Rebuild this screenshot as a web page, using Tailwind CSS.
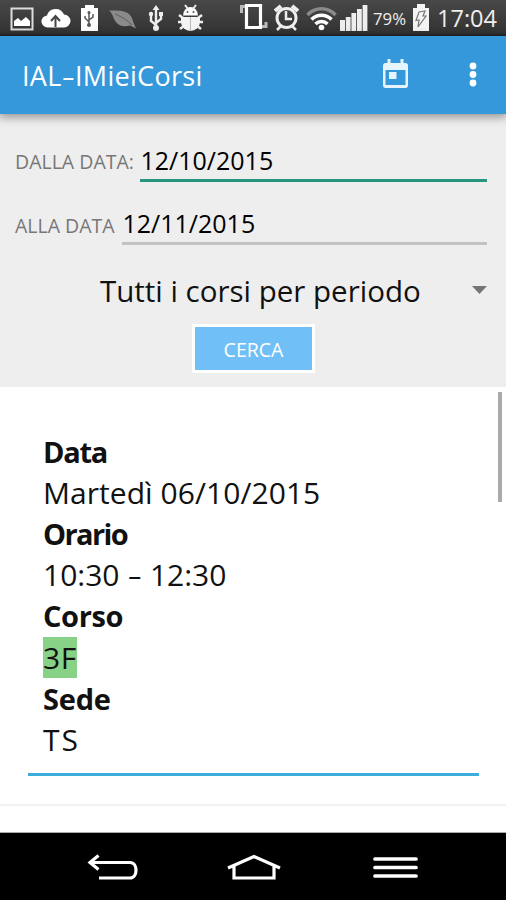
<!DOCTYPE html>
<html lang="it">
<head>
  <meta charset="UTF-8">
  <title>IAL-IMieiCorsi</title>
  <script src="https://cdn.jsdelivr.net/npm/@tailwindcss/browser@4"></script>
</head>
<body class="w-[506px] h-[900px] overflow-hidden flex flex-col bg-white text-[#111] font-['Open_Sans','Noto_Sans',sans-serif]">

  <!-- Status bar -->
  <div class="h-9 shrink-0 bg-linear-to-b from-[#484848] to-[#333] border-b-2 border-[#262626] text-[#eee]">
    <svg class="block" width="506" height="34" viewBox="0 0 506 34" fill="none">
      <!-- picture -->
      <path d="M11.500 8.500h21v21h-21z" stroke="#ddd" stroke-width="2"/>
      <path d="M14 26v-5l4-3 3 3 5-4 4 4v5z" fill="#fff"/>
      <!-- cloud upload -->
      <path d="M48 27.500a6 6 0 0 1-1-12 9 9 0 0 1 17-1 6.500 6.500 0 0 1 0 13z" fill="#fff"/>
      <path d="M55.500 27v-9M51 21l4.500-5 4.500 5" stroke="#444" stroke-width="2"/>
      <!-- battery with usb -->
      <path d="M81 8h4V5h9v3h4v23H81z" fill="#fff"/>
      <path d="M89 26V12m0 10-4-4v-2m4 4 4-3v-3" stroke="#555" stroke-width="1.500"/>
      <circle cx="89" cy="25" r="2" fill="#555"/><circle cx="89" cy="12.500" r="1.500" fill="#555"/>
      <!-- leaf -->
      <path d="M109 10.500c10 0 22-1 24 11l3 7-6-3c-10 3-15-3-17-9-1-3-2-4-4-6z" fill="#8a8a8a"/>
      <path d="M115 14c7 3 12 6 17 11" stroke="#5d5d5d"/>
      <!-- usb -->
      <path d="M156 29V8m0 17-5-4v-6m5 8 5-4v-5" stroke="#eee" stroke-width="2.400"/>
      <path d="m156 5 3.500 5h-7zM159 12h4v4h-4z" fill="#eee"/>
      <circle cx="151" cy="14" r="2.200" fill="#eee"/><circle cx="156" cy="28" r="3" fill="#eee"/>
      <!-- bug -->
      <path d="M183 15.500a7.500 8.500 0 0 1 15 0z" fill="#fff"/>
      <path d="m185 5 3 4m8-4-3 4" stroke="#eee" stroke-width="2"/>
      <path d="m179 15 4 3m-5 4h5m-3 7 5-4m17-10-4 3m5 4h-5m3 7-5-4" stroke="#eee" stroke-width="2.600"/>
      <path d="M181 17h19v5a9.500 9 0 0 1-19 0z" fill="#f4f4f4"/>
      <path d="M190.500 17v14" stroke="#bbb"/>
      <circle cx="187.500" cy="12" r="1" fill="#555"/><circle cx="193.500" cy="12" r="1" fill="#555"/>
      <!-- vibrate -->
      <path d="M246.500 5.500h14v22h-14z" stroke="#fff" stroke-width="3.200"/>
      <path d="M245 6.500h-3.500V13M262 26.500h4V22" stroke="#bbb" stroke-width="3"/>
      <!-- alarm -->
      <circle cx="286.500" cy="18" r="9.500" stroke="#eee" stroke-width="3"/>
      <path d="M286 11v8h6M281 26l-4 4m15-4 4 4" stroke="#eee" stroke-width="2.500"/>
      <path d="m275 11 6-5m11 0 6 5" stroke="#eee" stroke-width="4"/>
      <!-- wifi -->
      <path d="M307.500 15a19 19 0 0 1 28 0" stroke="#8a8a8a" stroke-width="3.500"/>
      <path d="M311.500 19.500a14 14 0 0 1 20 0M315.500 24a8.500 8.500 0 0 1 12 0" stroke="#fff" stroke-width="3.500"/>
      <circle cx="321.500" cy="27.500" r="2.800" fill="#fff"/>
      <!-- signal -->
      <path d="M340 20h5v11h-5zM345.800 17h4.800v14h-4.800zM351.400 13h4.800v18h-4.800zM357 9h4.800v22H357zM362.600 5h4.800v26h-4.800z" fill="#eee"/>
      <text x="373" y="24.500" font-size="17" font-weight="500" textLength="33" lengthAdjust="spacingAndGlyphs" fill="currentColor">79%</text>
      <!-- charging battery -->
      <path d="M413 8h4V4h8v4h4v23h-16z" fill="#f4f4f4"/>
      <path d="m419 12 6-1-2 5h3l-8 11 1-7-3 .5z" stroke="#777" stroke-width="1.200"/>
      <text x="437" y="27" font-size="24" font-weight="500" textLength="60" lengthAdjust="spacingAndGlyphs" fill="currentColor">17:04</text>
    </svg>
  </div>

  <!-- App bar -->
  <header class="relative z-10 h-[78px] shrink-0 flex items-center pl-[22px] pr-7 bg-[#3498db] text-white shadow-[0_2px_9px_1px_rgba(0,0,0,0.4)]">
    <h1 class="flex-1 pt-[3px] text-[27px] font-medium tracking-[0.3px] whitespace-nowrap">IAL<span class="inline-block scale-x-150 mx-[2.200px]">-</span>IMieiCorsi</h1>
    <svg class="mr-[59px] mt-[-3px]" width="28" height="30" viewBox="0 0 28 30" fill="none">
      <path d="M3.500 4h20Q26 4 26 7v19q0 3-2.500 3h-20Q1 29 1 26V7q0-3 2.500-3zm0 7v15h20V11z" fill="#e6f4fd" fill-rule="evenodd"/>
      <path d="M5.500 0h3v5h-3zM18.500 0h3v5h-3zM7 13h7.500v7H7z" fill="#e6f4fd"/>
    </svg>
    <svg class="mr-px" width="8" height="26" viewBox="0 0 8 26" fill="#fff">
      <circle cx="4" cy="4" r="3.400"/><circle cx="4" cy="12.500" r="3.400"/><circle cx="4" cy="21" r="3.400"/>
    </svg>
  </header>

  <!-- Search form -->
  <form class="h-[273px] shrink-0 bg-[#eee] pl-[15px] pr-[19px] pt-[25px]">
    <div class="h-[43px] flex items-stretch">
      <label class="w-[125px] shrink-0 pt-[9px] text-[19.500px] leading-7 text-[#777] whitespace-nowrap">DALLA DATA:</label>
      <div class="flex-1 border-b-[3px] border-[#279681] pt-1 pl-[0.5px] text-[25px] leading-[34px] text-black">12/10/2015</div>
    </div>
    <div class="mt-5 h-[43px] flex items-stretch">
      <label class="w-[107px] shrink-0 pt-[10px] text-[19.500px] leading-7 text-[#777] whitespace-nowrap">ALLA DATA</label>
      <div class="flex-1 border-b-[3px] border-[#c2c2c2] pt-1 pl-[0.5px] text-[25px] leading-[34px] text-black">12/11/2015</div>
    </div>
    <div class="mt-[25px] h-[42px] flex items-center">
      <span class="flex-1 pl-[85px] text-[29.500px] leading-[42px] whitespace-nowrap">Tutti i corsi per periodo</span>
      <svg class="mt-[-3px]" width="15" height="8" viewBox="0 0 15 8"><path d="M0 0h15L7.500 8z" fill="#757575"/></svg>
    </div>
    <button type="button" class="block mt-3 ml-[177px] w-[123px] h-[49px] pt-0.5 border-3 border-white bg-[#71bff7] text-white text-[19.500px] font-medium">CERCA</button>
  </form>

  <!-- Course list -->
  <main class="relative h-[446px] shrink-0 bg-white pt-[43.500px] px-7 border-b border-[#aaa]">
    <dl class="pl-[15px] h-[345.500px] border-b-[3px] border-[#3dabdc] mr-[-1px] text-[30px] leading-[41.200px]">
      <dt class="font-bold text-[29px] tracking-[-1.300px]">Data</dt>
      <dd class="tracking-[0.05px]">Martedì 06/10/2015</dd>
      <dt class="font-bold text-[29px] tracking-[-1.600px]">Orario</dt>
      <dd>10:30 <span class="inline-block scale-x-150 mx-[2.600px]">-</span> 12:30</dd>
      <dt class="font-bold text-[29px] tracking-[-0.4px]">Corso</dt>
      <dd><span class="bg-[#88d288] tracking-[0.5px]">3F</span></dd>
      <dt class="font-bold text-[29px] tracking-[-0.2px]">Sede</dt>
      <dd class="tracking-[2px]">TS</dd>
    </dl>
    <div class="mt-7 -mx-7 h-0.5 bg-[#f2f2f2]"></div>
    <div class="absolute top-[5px] right-1 w-1 h-[110px] bg-[#aaa]"></div>
  </main>

  <!-- Navigation bar -->
  <nav class="flex-1 bg-black">
    <svg class="block" width="506" height="67" viewBox="0 0 506 67" fill="none" stroke="#fff" stroke-width="3.200">
      <path d="M89 29.500h41c8 0 8 15.500 0 15.500H99M98.500 22.500l-8.500 7 8.500 7"/>
      <path d="m228 35 26-11.500L280 35M234 33v12h40V33"/>
      <path d="M375 26h41M375 34.500h41M375 43h41" stroke-width="3.700" stroke-linecap="round"/>
    </svg>
  </nav>
</body>
</html>
